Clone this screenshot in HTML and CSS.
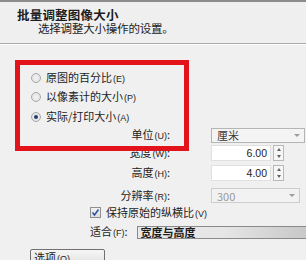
FILE: index.html
```html
<!DOCTYPE html>
<html>
<head>
<meta charset="utf-8">
<link rel="stylesheet" href="styles.css">
</head>
<body>
<div class="dialog">
  <div class="header">
    <div class="title">批量调整图像大小</div>
    <div class="subtitle">选择调整大小操作的设置。</div>
  </div>
  <div class="content">
    <div class="radios">
      <div class="radio-row"><span class="radio"></span><span>原图的百分比<small>(E)</small></span></div>
      <div class="radio-row"><span class="radio"></span><span>以像素计的大小<small>(P)</small></span></div>
      <div class="radio-row"><span class="radio checked"></span><span>实际/打印大小<small>(A)</small></span></div>
    </div>
    <div class="form">
      <div class="lbl">单位<small>(U)</small>:</div>
      <div class="select"><span>厘米</span><span class="caret"></span></div>
      <div class="lbl">宽度<small>(W)</small>:</div>
      <div class="spin"><span class="num">6.00</span><span class="arrows"><i class="up"></i><i class="down"></i></span></div>
      <div class="lbl">高度<small>(H)</small>:</div>
      <div class="spin"><span class="num">4.00</span><span class="arrows"><i class="up"></i><i class="down"></i></span></div>
      <div class="lbl">分辨率<small>(R)</small>:</div>
      <div class="select disabled"><span>300</span><span class="caret"></span></div>
    </div>
    <div class="check-row"><span class="checkbox">
      <svg width="9" height="9" viewBox="0 0 9 9"><path d="M1.5 4.5 L3.5 7 L7.5 1.5" fill="none" stroke="#2a4fa0" stroke-width="1.5"/></svg>
    </span><span>保持原始的纵横比<small>(V)</small></span></div>
    <div class="fit-row"><span>适合<small>(F)</small>:</span><div class="fit-select">宽度与高度</div></div>
    <div class="button-row"><div class="button">选项<small>(O)</small>...</div></div>
  </div>
  <div class="highlight"></div>
</div>
</body>
</html>
```
FILE: styles.css
```css
* { box-sizing: border-box; }
html, body { margin: 0; padding: 0; }
body {
  width: 306px;
  height: 260px;
  overflow: hidden;
  background: #f0f0f0;
  font-family: "Noto Sans CJK SC", "Liberation Sans", sans-serif;
  font-size: 11px;
  color: #1c1c1c;
}
small { font-size: 9px; font-family: "Liberation Sans", sans-serif; margin-left: 1px; }
.dialog { position: relative; height: 260px; overflow: hidden; }
.header {
  border-top: 2px solid #8c8c8c;
  border-bottom: 1px solid #a9a9a9;
  height: 44px;
  padding: 5px 0 0 17px;
  background: #efefef;
  box-shadow: 0 1px 0 #ffffff;
}
.title { font-weight: bold; font-size: 12.5px; line-height: 15px; letter-spacing: 0.2px; }
.subtitle { padding-left: 21px; font-size: 11.5px; line-height: 12px; letter-spacing: -0.2px; }
.content { padding-top: 24px; }
.radios { padding-left: 31px; display: flex; flex-direction: column; }
.radio-row { height: 19.5px; display: flex; align-items: center; gap: 5px; line-height: 14px; }
.radio {
  width: 10px; height: 10px; border-radius: 50%;
  border: 1px solid #a8a8a8;
  background: radial-gradient(circle, #f4f4f4 0, #dcdcdc 100%);
  display: inline-flex; align-items: center; justify-content: center;
}
.radio.checked::after {
  content: ""; width: 4px; height: 4px; border-radius: 50%; background: #1f3f6e;
}
.form {
  display: grid;
  grid-template-columns: 170px 94px;
  grid-template-rows: 17px 18px 23px 22px;
  column-gap: 41px;
  align-items: center;
  line-height: 14px;
}
.lbl { text-align: right; }
.select {
  height: 15px;
  border: 1px solid #b5b5b5;
  background: #f4f4f4;
  display: flex; align-items: center; justify-content: space-between;
  padding: 0 4px 0 5px;
  color: #3a3a3a;
}
.select.disabled { width: 89px; color: #9a9a9a; background: #f2f2f2; border-color: #cdcdcd; }
.caret {
  width: 0; height: 0;
  border-left: 3px solid transparent; border-right: 3px solid transparent;
  border-top: 3px solid #9c9c9c;
}
.spin { display: flex; align-items: center; gap: 2px; height: 16px; }
.num {
  width: 60px; height: 16px; background: #fff;
  border: 1px solid #e0e0e0; text-align: right; padding-right: 3px;
  line-height: 14px; font-family: "Liberation Sans", sans-serif; font-size: 10.5px;
}
.arrows {
  width: 11px; height: 16px; border: 1px solid #b8b8b8; background: #f6f6f6;
  display: flex; flex-direction: column; align-items: center; justify-content: space-around;
}
.arrows i { width: 0; height: 0; border-left: 2.5px solid transparent; border-right: 2.5px solid transparent; }
.arrows .up { border-bottom: 3px solid #606060; }
.arrows .down { border-top: 3px solid #606060; }
.check-row { padding-left: 90px; display: flex; align-items: center; gap: 5px; height: 12px; line-height: 12px; }
.checkbox {
  width: 11px; height: 11px; border: 1px solid #8e8f8f;
  background: linear-gradient(#f2f2f2, #dedede);
  display: inline-flex; align-items: center; justify-content: center;
}
.fit-row { padding-left: 90px; display: flex; align-items: center; gap: 9px; height: 27px; line-height: 14px; }
.fit-select {
  flex: 1; height: 13px; border: 1px solid #8a8a8a; border-right: none;
  background: linear-gradient(90deg, #e8e8e8 0%, #e6e6e6 50%, #c8c8c8 100%);
  line-height: 11px; padding-left: 3px; font-weight: bold; color: #1a1a1a;
}
.button-row { padding: 3px 0 0 30px; }
.button {
  width: 75px; height: 16px; border: 1px solid #707070; border-radius: 2px;
  background: linear-gradient(#f6f6f6, #e2e2e2);
  padding-left: 3px; line-height: 14px;
}
.highlight {
  position: absolute; left: 15px; top: 60px; width: 174px; height: 91px;
  border: 5px solid #e2131b;
}
```
